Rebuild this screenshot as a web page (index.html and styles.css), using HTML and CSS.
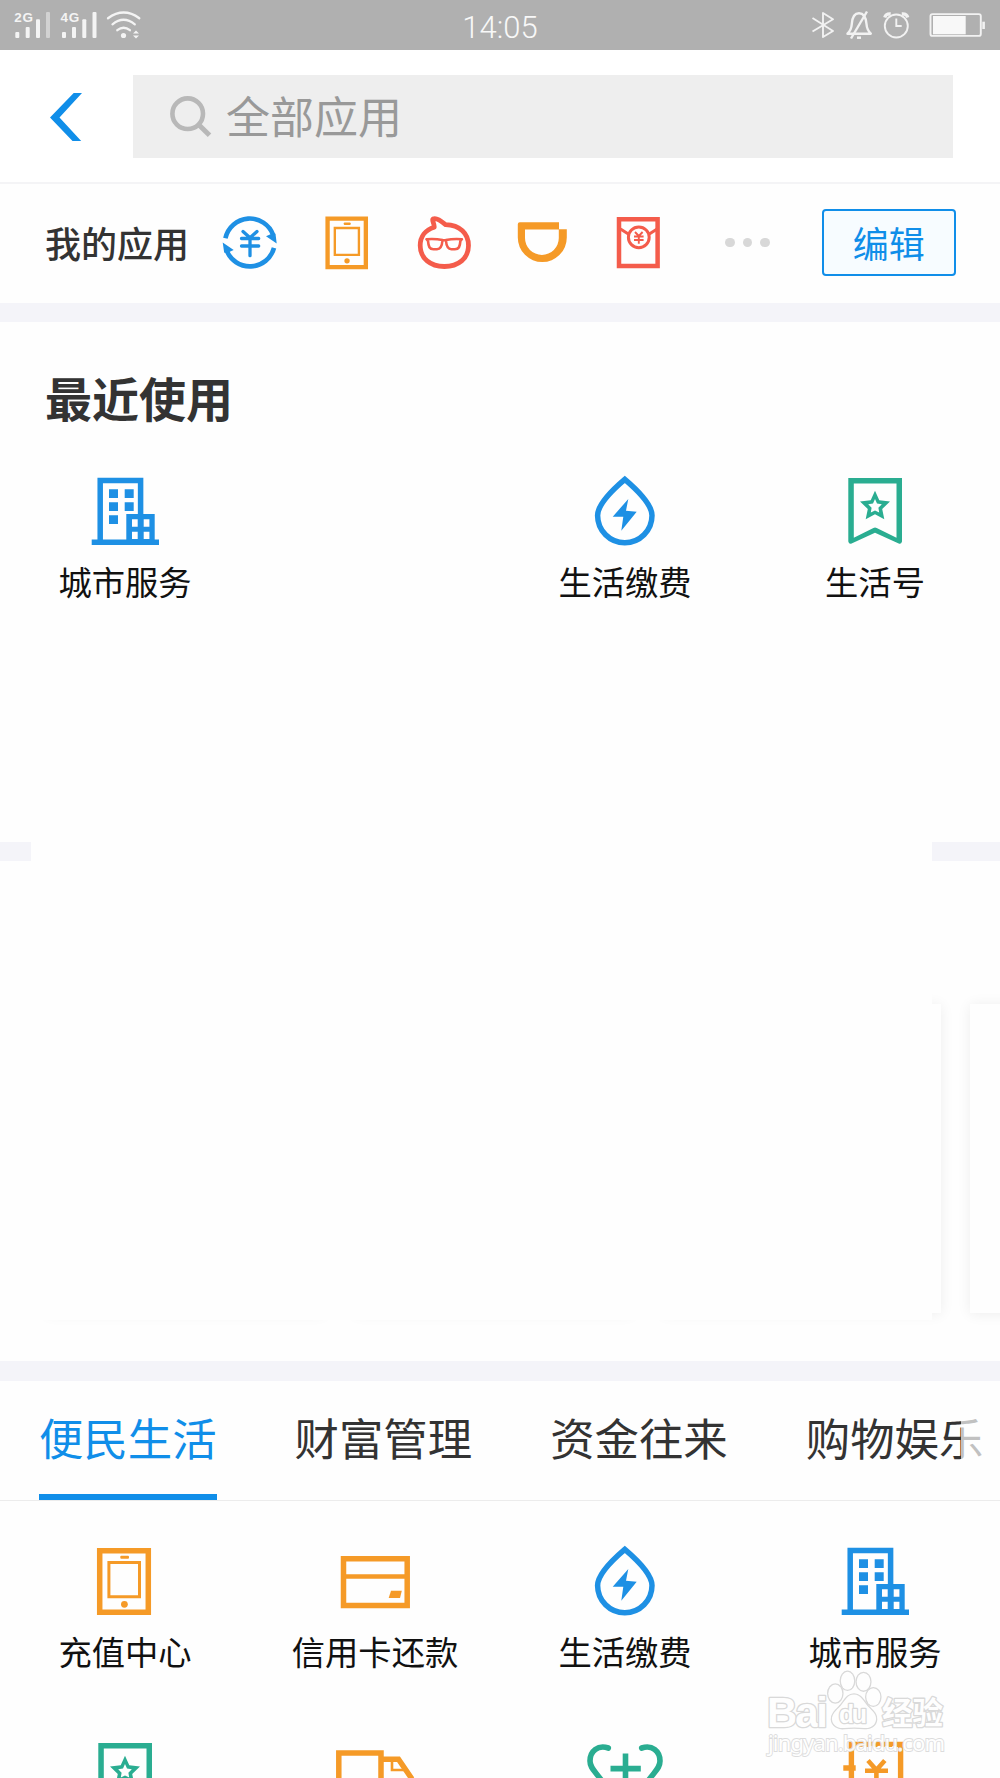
FILE: index.html
```html
<!DOCTYPE html>
<html lang="zh-CN">
<head>
<meta charset="utf-8">
<title>全部应用</title>
<link rel="stylesheet" href="styles.css">
</head>
<body>
<svg class="sprite" width="0" height="0" aria-hidden="true">
  <symbol id="city" viewBox="0 0 80 80">
    <path d="M15.2 69V9.4h40.4V44" fill="none" stroke="currentColor" stroke-width="5.5"/>
    <path fill="currentColor" d="M6.7 68.4H74V74H6.7zM24 18.3h9V27h-9zM39.7 18.3h9V27h-9zM24 31.3h9V40h-9zM39.7 31.3h9V40h-9zM24 44.3h9V53h-9z"/>
    <path fill="currentColor" fill-rule="evenodd" d="M41.3 43h28.4v27H41.3zM47 48.3v7.4h5.7v-7.4zM58.7 48.3v7.4h5.7v-7.4zM47 60.7v7.4h5.7v-7.4zM58.7 60.7v7.4h5.7v-7.4z"/>
  </symbol>
  <symbol id="drop" viewBox="0 0 80 80">
    <path d="M39.8 8.3C29 17.5 12.6 33 12.6 44.5a27.2 27.2 0 0 0 54.4 0C67 33 50.6 17.5 39.8 8.3z" fill="none" stroke="currentColor" stroke-width="5.5"/>
    <path fill="currentColor" d="M43.3 28 27.7 45.7h10.6l-2 14 15.4-19L41 39.7z"/>
  </symbol>
  <symbol id="bookmark" viewBox="0 0 80 80">
    <path d="M13.3 7H67v63.5q-.7 2.800-3.300 2L40 61.800 16.600 72.500q-2.700.800-3.300-2zM18.800 12.400v54.300L38.400 57q1.600-1.100 3.300 0l19.800 9.700V12.400z" fill="currentColor" fill-rule="evenodd"/>
    <path fill="currentColor" fill-rule="evenodd" d="M40 19.700 44.300 29.200 55 30.600 47.200 38 49.300 48.300 40 43.300 30.700 48.300 32.800 38 25 30.600 35.700 29.200zM40 28 38 32.600 33.200 33.300 36.600 36.800 35.800 41.600 40 39.400 44.200 41.600 43.400 36.800 46.800 33.300 42 32.600z"/>
  </symbol>
  <symbol id="phone" viewBox="0 0 80 80">
    <path d="M14.700 9.700h48.600v61.600H14.700z" fill="none" stroke="currentColor" stroke-width="5.500"/>
    <path d="M23.900 21.600h30.600v34.200H23.900z" fill="none" stroke="currentColor" stroke-width="3"/>
    <rect x="35.300" y="14.700" width="8.700" height="3" rx="1" fill="currentColor"/>
    <circle cx="39.400" cy="63.300" r="3.400" fill="currentColor"/>
  </symbol>
  <symbol id="card" viewBox="0 0 80 80">
    <path d="M8.500 17.700h63.700v46.800H8.500z" fill="none" stroke="currentColor" stroke-width="5.500"/>
    <path d="M8 35.500h65" stroke="currentColor" stroke-width="4.600"/>
    <path fill="currentColor" d="M56 49.700h10.800L65 57H53.700z"/>
  </symbol>
  <symbol id="truck" viewBox="0 0 80 80">
    <path d="M3.800 80V17.100H46V80" fill="none" stroke="currentColor" stroke-width="5.500"/>
    <path d="M47 23.200h16.500L77 43" fill="none" stroke="currentColor" stroke-width="5.500"/>
    <path d="M57 25v9h12" fill="none" stroke="currentColor" stroke-width="2.600"/>
  </symbol>
  <symbol id="heart" viewBox="0 0 80 80">
    <path d="M23.300 12C13 8.500 5 15 5 25c0 7 5 10 12 20M56.700 12C67 8.500 75 15 75 25c0 7-5 10-12 20" fill="none" stroke="currentColor" stroke-width="5.600" stroke-linecap="round"/>
    <path d="M40.500 20.200V50M28.300 32.600H53" fill="none" stroke="currentColor" stroke-width="5.600" stroke-linecap="square" stroke-linejoin="round"/>
  </symbol>
  <symbol id="receipt" viewBox="0 0 80 80">
    <path d="M16.400 80V8.400h49.200V80M8.300 32h12.400" fill="none" stroke="currentColor" stroke-width="5.400"/>
    <path d="M33 24.500l8.400 9.500 8.400-9.500M30 34.800h23M41.400 34v20" fill="none" stroke="currentColor" stroke-width="4.600"/>
    <path d="M22 12h44" stroke="#fefefe" stroke-width="4.600" stroke-linecap="round" stroke-dasharray="0 7.400"/>
  </symbol>
</svg>

<div class="screen">
  <header class="status">
    <svg width="150" height="50" viewBox="0 0 150 50">
      <g fill="#f4f4f4">
        <text class="net" x="14.300" y="22" textLength="18.700">2G</text>
        <text class="net" x="60.500" y="22" textLength="18.700">4G</text>
        <rect x="15.300" y="32" width="4" height="6" rx="1"/><rect x="25.700" y="27" width="4" height="11" rx="1"/><rect x="36" y="19.300" width="4" height="18.700" rx="1"/><rect x="46" y="12" width="4" height="26" rx="1" opacity=".5"/>
        <rect x="62" y="32" width="4" height="6" rx="1"/><rect x="72" y="27" width="4" height="11" rx="1"/><rect x="82.300" y="19.300" width="4" height="18.700" rx="1"/><rect x="92.500" y="12" width="4" height="26" rx="1"/>
        <circle cx="123.500" cy="35.500" r="2.600"/>
        <path d="M133 33.500l3-3 3 3zM133 35.500h6l-3 3z"/>
      </g>
      <path d="M108 18.200q15.700-11.400 31.300 0M112.500 24.300q11-9 22.300 0M117.300 30.200q6.300-5 12.600 0" fill="none" stroke="#f4f4f4" stroke-width="2.300" stroke-linecap="round"/>
    </svg>
    <span class="clock">14:05</span>
    <svg width="200" height="50" viewBox="0 0 200 50" fill="none" stroke="#f2f2f2" stroke-width="1.900">
      <path d="M12.500 18 33 31l-10 6V13l10 6.200-20.500 12.300" stroke-linejoin="round"/>
      <path d="M47.500 33.700c3-3 4-5 4.300-9.700.4-6 2.500-10.800 7.200-10.800S66 18 66.500 24c.3 4.700 1.300 6.700 4.300 9.700z" stroke-width="2.400" stroke-linejoin="round"/>
      <path d="M67 11.500 51 38.500" stroke-width="2.400"/><path d="M57 37.700h4"  stroke-width="2.500"/>
      <circle cx="96.300" cy="26" r="11.500"/><path d="M96.300 18.500V26h5.400"/>
      <path d="M84.700 17.500q1-4 6-3.600M107.800 17.500q-1-4-6-3.600" stroke-width="3.200"/>
      <rect x="130.500" y="14.100" width="50.300" height="21.800" rx="2"/>
      <rect x="133" y="16" width="32.700" height="18.300" fill="#f8f8f8" stroke="none"/>
      <path d="M183.600 21.700V29" stroke-width="2.600"/>
    </svg>
  </header>

  <div class="topbar">
    <svg class="back" width="34" height="48" viewBox="0 0 34 48"><path fill="#108ee9" d="M23.700 0H32L9.500 24.600 31.200 48H22.500L0 24.600z"/></svg>
    <div class="search">
      <svg width="42" height="44" viewBox="0 0 42 44" fill="none" stroke="#b8b8b8"><circle cx="17.700" cy="19.700" r="15.300" stroke-width="4.600"/><path d="M28.500 30.500 39.500 41.300" stroke-width="5"/></svg>
      <span>全部应用</span>
    </div>
  </div>

  <div class="mine">
    <span class="mine-label">我的应用</span>
    <div class="mine-icons">
      <svg class="blue" width="64" height="64" viewBox="0 0 64 64" fill="none" stroke="currentColor">
        <path d="M7.400 27.300A24.900 24.900 0 0 1 55.200 24M56 36.800A24.900 24.900 0 0 1 8.500 39" stroke-width="4.600"/>
        <path fill="currentColor" stroke="none" d="M58.700 32.600 48 25.300l4.500-2 5-.5zM4.700 31.600l11 7.500-4.500 2-5 .7z"/>
        <path d="M25 20.500l7 6.300 7-6.300M23.500 27.500h17.200M23.500 35h17.200M32 27v17.700" stroke-width="3.300" stroke-linecap="round"/>
      </svg>
      <svg class="orange phone-small" width="64" height="63"><use href="#phone" x="1" width="63" height="63"/></svg>
      <svg class="red" width="64" height="64" viewBox="0 0 64 64" fill="none" stroke="currentColor" stroke-linejoin="round">
        <path d="M32.500 13.600C28 10 23.500 6.500 20 8c-1.500 1 1.500 4.500 1.200 8.200C12.500 18.800 7.200 25.500 7.200 34.500c0 13 10.300 21 24.200 21s24.100-8 24.100-21c0-12-8.500-20.500-23-20.900z" stroke-width="4.800"/>
        <path d="M13.500 28.200q8.500-.7 16 .8c-.5 7-2.500 9.300-5.500 9.300h-3.500c-4 0-5-2.600-5.500-8.500zM48.900 28.200q-8.500-.7-16 .8c.5 7 2.500 9.300 5.500 9.300h3.500c4 0 5-2.600 5.500-8.500zM29 29.300h4.500" stroke-width="2.600"/>
      </svg>
      <svg class="orange" width="64" height="64" viewBox="0 0 64 64"><path fill="currentColor" fill-rule="evenodd" d="M7.800 13.300q0-2 2-2H49v7h7.800v8.200a24.500 24.500 0 0 1-49 0zM15 18.600V27a16.900 16.900 0 0 0 33.800 0v-8.400z"/></svg>
      <svg class="red" width="64" height="64" viewBox="0 0 64 64" fill="none" stroke="currentColor">
        <path d="M12 8.300h38.600v46.800H12z" stroke-width="4.500"/>
        <circle cx="31.800" cy="26.300" r="10.400" stroke-width="3"/>
        <path d="M13.500 18l8.600 5.500M50.100 18l-8.600 5.500" stroke-width="3"/>
        <path d="M28 21l3.800 4 3.800-4M27 25.500h9.600M27 29h9.600M31.800 25v7.800" stroke-width="1.900"/>
      </svg>
    </div>
    <div class="dots"><i></i><i></i><i></i></div>
    <button class="edit">编辑</button>
  </div>

  <section class="recent">
    <h2>最近使用</h2>
    <div class="grid">
      <div class="app blue"><svg><use href="#city"/></svg><span>城市服务</span></div>
      <div class="app"></div>
      <div class="app blue"><svg><use href="#drop"/></svg><span>生活缴费</span></div>
      <div class="app green"><svg><use href="#bookmark"/></svg><span>生活号</span></div>
    </div>
  </section>

  <section class="promo">
    <div class="cards"><div class="tile"></div><div class="tile"></div><div class="tile"></div><div class="tile"></div></div>
    <div class="blank"></div>
  </section>

  <nav class="tabs">
    <span class="tab active">便民生活</span>
    <span class="tab">财富管理</span>
    <span class="tab">资金往来</span>
    <span class="tab">购物娱乐</span>
  </nav>

  <div class="grid services">
    <div class="app orange"><svg><use href="#phone"/></svg><span>充值中心</span></div>
    <div class="app orange"><svg><use href="#card"/></svg><span>信用卡还款</span></div>
    <div class="app blue"><svg><use href="#drop"/></svg><span>生活缴费</span></div>
    <div class="app blue"><svg><use href="#city"/></svg><span>城市服务</span></div>
    <div class="app green"><svg><use href="#bookmark"/></svg></div>
    <div class="app orange"><svg><use href="#truck"/></svg></div>
    <div class="app green"><svg><use href="#heart"/></svg></div>
    <div class="app orange"><svg><use href="#receipt"/></svg></div>
  </div>

  <svg class="watermark" width="200" height="113" viewBox="0 0 200 113">
    <g fill="#fff" stroke="#d6d6d6" stroke-width="2.600" paint-order="stroke" stroke-linejoin="round">
      <text class="wm-latin" x="7" y="61.500" font-size="42" textLength="61">Bai</text>
      <ellipse cx="87.500" cy="15.800" rx="6.600" ry="9"/><ellipse cx="103.500" cy="16.800" rx="6.800" ry="8.800"/>
      <ellipse cx="75.300" cy="28.500" rx="7" ry="9"/><ellipse cx="113.300" cy="32" rx="7" ry="8.700"/>
      <path d="M94 29.500c7 0 9.500 7 14 12 5 5 8.500 8 8 13-.5 6-6 9-11 8.500-7-.8-15-.8-21 0-6 .7-11.500-2.500-12-8.500-.4-5 4-9 8.500-13.500 4.500-5 6.500-11.500 13.500-11.500z"/>
      <text class="wm-latin" x="79" y="58" font-size="25" textLength="28">du</text>
      <text class="wm-cjk" x="122" y="58.500" font-size="30.500" textLength="61">经验</text>
    </g>
    <text class="wm-url" x="8" y="86" textLength="177">jingyan.baidu.com</text>
  </svg>
</div>
</body>
</html>
```
FILE: styles.css
```css
* { box-sizing: border-box; }
body {
  margin: 0;
  background: #fefefe;
  font-family: "Noto Sans CJK SC", sans-serif;
  color: #333;
}
svg { display: block; flex: none; }
.sprite { position: absolute; }
.screen {
  position: relative;
  width: 1000px;
  height: 1778px;
  overflow: hidden;
  display: flex;
  flex-direction: column;
}
.screen > * { flex: none; }

.blue { color: #1e90e4; }
.orange { color: #f59a27; }
.red { color: #f45c4b; }
.green { color: #2aad91; }

.status {
  height: 50px;
  background: #b0b0b0;
  display: grid;
  grid-template-columns: 200px 1fr 200px;
}
.clock {
  text-align: center;
  font: 300 31px/56px Roboto, sans-serif;
  color: #f8f8f8;
}
.net { font: bold 13.500px "Liberation Sans", sans-serif; }

.topbar {
  height: 134px;
  background: #fff;
  border-bottom: 2px solid #f4f4f6;
  display: flex;
  align-items: flex-start;
  padding-top: 25px;
}
.back { margin: 18px 49px 0 50px; }
.search {
  width: 820px;
  height: 83px;
  background: #eee;
  display: flex;
  align-items: center;
  padding-left: 37px;
  font-size: 44px;
  line-height: 78px;
  color: #999;
}
.search span { padding-bottom: 3px; }
.search svg { margin: 0 14px 2px 0; }

.mine {
  height: 138px;
  border-bottom: 19px solid #f4f4f9;
  display: flex;
  align-items: center;
  padding: 0 0 2px 45px;
}
.mine-label {
  width: 173px;
  font-size: 36px;
  line-height: 50px;
  padding-bottom: 2px;
  font-weight: 500;
}
.mine-icons { display: flex; align-items: center; gap: 33.300px; }
.dots { display: flex; gap: 8px; margin-left: 54px; }
.dots i { width: 9.500px; height: 9.500px; border-radius: 50%; background: #d8d8d8; }
.edit {
  margin-left: 52px;
  width: 134px;
  height: 67px;
  border: 2px solid #108ee9;
  border-radius: 4px;
  background: #f7fcff;
  color: #108ee9;
  font: 36px/60px "Noto Sans CJK SC", sans-serif;
  padding: 0 0 2px;
}

.recent { height: 539px; border-bottom: 19px solid #f4f4f9; }
h2 {
  margin: 0;
  padding: 42px 0 0 45px;
  height: 149px;
  font-size: 47px;
  line-height: 66px;
  font-weight: 700;
}
.grid { display: grid; grid-template-columns: repeat(4, 250px); grid-auto-rows: 195px; }
.app { display: flex; flex-direction: column; align-items: center; }
.app svg { width: 80px; height: 80px; }
.app span {
  margin-top: 7px;
  font-size: 33.300px;
  line-height: 46px;
  color: #111;
}

.promo {
  position: relative;
  height: 520px;
  border-bottom: 20px solid #f4f4f9;
}
.cards { display: flex; gap: 29px; padding: 143px 0 0 46px; overflow: hidden; height: 500px; }
.tile {
  flex: none;
  width: 279px;
  height: 309px;
  background: #fefefe;
  box-shadow: 0 1px 13px rgba(0, 0, 0, .07);
}
.blank {
  position: absolute;
  left: 31px;
  top: -19px;
  width: 901px;
  height: 478px;
  background: #fefefe;
}

.tabs {
  height: 120px;
  border-bottom: 1px solid #ececec;
  display: flex;
  gap: 78px;
  padding-left: 39px;
  position: relative;
}
.tab {
  flex: none;
  height: 119px;
  font-size: 44.400px;
  line-height: 112px;
  border-bottom: 6px solid transparent;
}
.tab.active { color: #108ee9; border-color: #108ee9; }
.tabs::after {
  content: "";
  position: absolute;
  right: 0;
  top: 0;
  width: 39px;
  height: 119px;
  background: rgba(254, 254, 254, .7);
}
.services { padding-top: 40px; }

.watermark { position: absolute; left: 760px; top: 1665px; opacity: .92; }
.wm-latin { font-family: "Liberation Sans", sans-serif; font-weight: bold; }
.wm-cjk { font-family: "Noto Sans CJK SC", sans-serif; font-weight: 700; }
.wm-url {
  font: 22px "Noto Sans", sans-serif;
  fill: #fff;
  stroke: #dadada;
  stroke-width: 1.800px;
  paint-order: stroke;
}
```
